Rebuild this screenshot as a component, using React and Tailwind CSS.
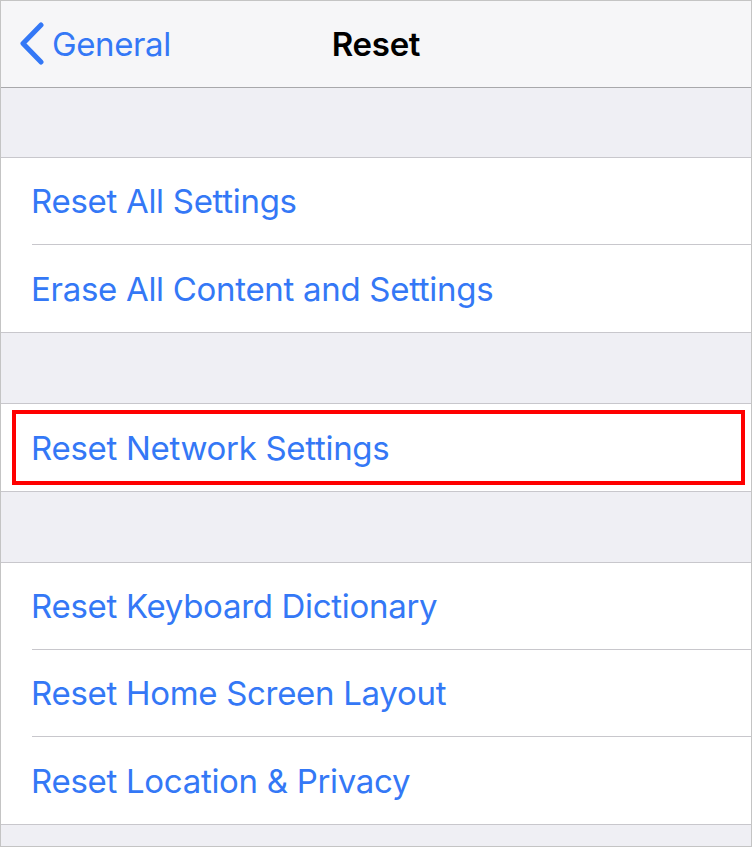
import React from "react";

const Row = ({ label, last }) => (
  <div className="h-[87px] pl-[31px] bg-white">
    <div className={`h-full flex items-center ${last ? "" : "border-b border-[#c8c7cc]"}`}>
      <span className="-ml-[1px] text-[33px] text-[#3478f6] tracking-[-0.3px] pt-[2px]">{label}</span>
    </div>
  </div>
);

const Group = ({ children }) => (
  <div className="border-y border-[#c8c7cc] bg-white">{children}</div>
);

export default function App() {
  return (
    <div
      className="w-[752px] h-[847px] border border-[#c4c4c4] bg-[#efeff4] flex flex-col overflow-hidden"
      style={{ fontFamily: "Inter, 'Noto Sans', sans-serif" }}
    >
      <header className="h-[87px] shrink-0 bg-[#f6f6f8] border-b border-[#a8a8ab] relative flex items-center justify-center">
        <button className="absolute left-[18px] top-[21px] flex items-center gap-[7px] text-[#3478f6]">
          <svg width="26" height="43" viewBox="0 0 26 43" fill="none">
            <path d="M22 3 L4 21.5 L22 40" stroke="#3478f6" strokeWidth="5" strokeLinecap="round" strokeLinejoin="round" />
          </svg>
          <span className="text-[33px] tracking-[-0.4px] leading-none pt-[2px]">General</span>
        </button>
        <h1 className="text-[33px] font-semibold text-black tracking-[-0.3px] pt-[1px]">Reset</h1>
      </header>

      <div className="h-[69px] shrink-0" />
      <Group>
        <Row label="Reset All Settings" />
        <Row label="Erase All Content and Settings" last />
      </Group>

      <div className="h-[70px] shrink-0" />
      <Group>
        <div className="relative">
          <Row label="Reset Network Settings" last />
          <div className="absolute left-[11px] right-[6px] top-[6px] bottom-[6px] border-[4px] border-[#ff0000] pointer-events-none" />
        </div>
      </Group>

      <div className="h-[70px] shrink-0" />
      <Group>
        <Row label="Reset Keyboard Dictionary" />
        <Row label="Reset Home Screen Layout" />
        <Row label="Reset Location & Privacy" last />
      </Group>
    </div>
  );
}
